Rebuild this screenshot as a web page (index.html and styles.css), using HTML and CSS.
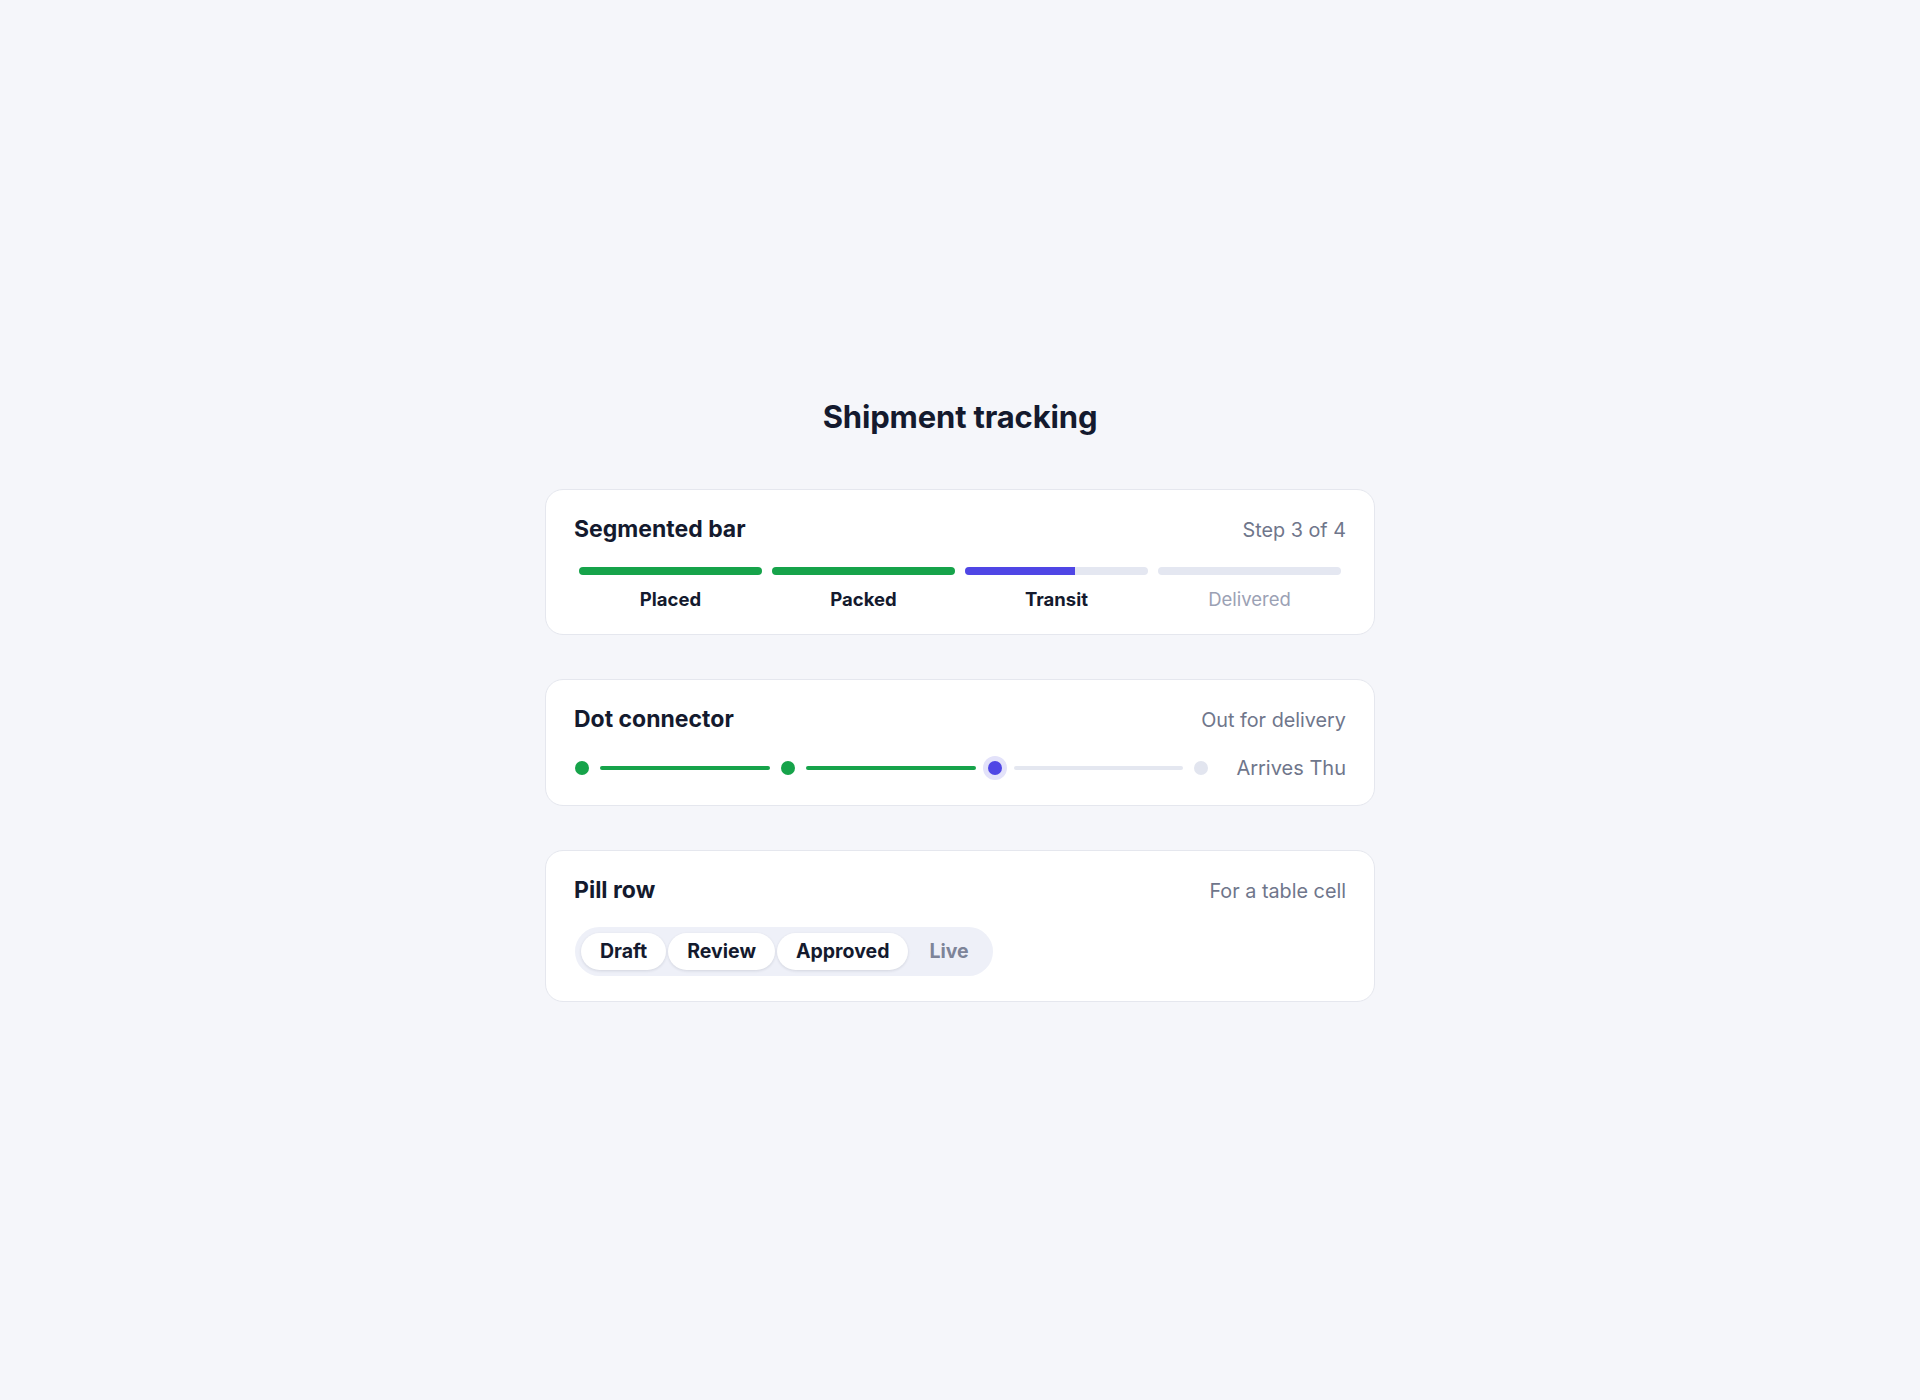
FILE: index.html
```html
<!DOCTYPE html>
<html lang="en">

<head>
    <meta charset="UTF-8">
    <meta name="viewport" content="width=device-width, initial-scale=1.0">
    <title>Shipment tracking</title>
    <link rel="stylesheet" href="styles.css">
</head>

<body>
    <main class="page">
        <h1 class="page-title">Shipment tracking</h1>

        <!-- 分段进度条 -->
        <section class="card">
            <div class="card-head">
                <h2 class="card-title">Segmented bar</h2>
                <span class="card-note">Step 3 of 4</span>
            </div>
            <div class="segments">
                <div class="segment done">
                    <span class="bar"><span class="fill" style="width: 100%"></span></span>
                    <span class="label">Placed</span>
                </div>
                <div class="segment done">
                    <span class="bar"><span class="fill" style="width: 100%"></span></span>
                    <span class="label">Packed</span>
                </div>
                <div class="segment current">
                    <span class="bar"><span class="fill" style="width: 60%"></span></span>
                    <span class="label">Transit</span>
                </div>
                <div class="segment">
                    <span class="bar"><span class="fill" style="width: 0%"></span></span>
                    <span class="label">Delivered</span>
                </div>
            </div>
        </section>

        <!-- 圆点连线 -->
        <section class="card">
            <div class="card-head">
                <h2 class="card-title">Dot connector</h2>
                <span class="card-note">Out for delivery</span>
            </div>
            <div class="dots">
                <span class="dot done"></span>
                <span class="line done"></span>
                <span class="dot done"></span>
                <span class="line done"></span>
                <span class="dot current"></span>
                <span class="line"></span>
                <span class="dot"></span>
                <span class="eta">Arrives Thu</span>
            </div>
        </section>

        <!-- 胶囊按钮组 -->
        <section class="card">
            <div class="card-head">
                <h2 class="card-title">Pill row</h2>
                <span class="card-note">For a table cell</span>
            </div>
            <div class="pills">
                <span class="pill done">Draft</span>
                <span class="pill done">Review</span>
                <span class="pill done">Approved</span>
                <span class="pill">Live</span>
            </div>
        </section>
    </main>
</body>

</html>
```

FILE: styles.css
```css
body {
    margin: 0;
    background: #f5f6fa;
    font-family: Inter, "Noto Sans", "Liberation Sans", sans-serif;
    color: #141a2e;
}

/* 整体内容在窗口里上下左右居中 */
.page {
    min-height: 100vh;
    display: flex;
    flex-direction: column;
    align-items: center;
    justify-content: center;
    gap: 44px;
}

.page-title {
    margin: 0 0 10px;
    font-size: 31px;
    line-height: 36px;
    font-weight: 700;
    letter-spacing: -0.005em;
}

.card {
    width: 830px;
    box-sizing: border-box;
    padding: 26px 28px 23px;
    background: #fff;
    border: 1px solid #e5e7ee;
    border-radius: 18px;
}

.card-head {
    display: flex;
    justify-content: space-between;
    align-items: baseline;
}

.card-title {
    margin: 0;
    font-size: 23px;
    line-height: 26px;
    font-weight: 700;
}

.card-note {
    font-size: 19.8px;
    line-height: 26px;
    color: #6f768b;
}

/* 分段进度条 */
.segments {
    display: flex;
    gap: 10px;
    padding: 0 5px;
    margin: 24px 0 1px;
}

.segment {
    flex: 1;
    display: flex;
    flex-direction: column;
    align-items: center;
    gap: 13px;
}

.segment .bar {
    display: block;
    width: 100%;
    height: 8px;
    border-radius: 4px;
    background: #e4e7f1;
    overflow: hidden;
}

.segment .fill {
    display: block;
    height: 100%;
    background: #16a34a;
}

.segment.current .fill {
    background: #4f46e5;
}

.segment .label {
    font-size: 18.5px;
    line-height: 22px;
    color: #9ba1b4;
}

.segment.done .label,
.segment.current .label {
    color: #141a2e;
    font-weight: 700;
}

/* 圆点和连线 */
.dots {
    display: flex;
    align-items: center;
    gap: 11px;
    height: 26px;
    margin: 22px 0 1px;
    padding-left: 1px;
}

.dot {
    flex: none;
    width: 14px;
    height: 14px;
    border-radius: 50%;
    background: #e2e5ef;
}

.dot.done {
    background: #16a34a;
}

.dot.current {
    background: #4f46e5;
    box-shadow: 0 0 0 5px #e3e2fa;
}

.line {
    flex: 1;
    height: 4px;
    border-radius: 2px;
    background: #e4e7f0;
}

.line.done {
    background: #16a34a;
}

.dot.current + .line,
.line.done + .dot.current {
    margin-left: 1px;
}

.eta {
    margin-left: 17px;
    font-size: 20px;
    color: #6f768b;
}

/* 胶囊按钮组 */
.pills {
    display: inline-flex;
    gap: 2px;
    margin: 23px 0 2px 1px;
    padding: 6px 5px 6px 6px;
    border-radius: 999px;
    background: #eef0f8;
}

.pill {
    padding: 0 19px;
    line-height: 37px;
    font-size: 19.5px;
    font-weight: 700;
    color: #7d8499;
    border-radius: 999px;
}

.pill.done {
    background: #fff;
    color: #141a2e;
    box-shadow: 0 1px 3px rgba(20, 26, 46, 0.12);
}
```
